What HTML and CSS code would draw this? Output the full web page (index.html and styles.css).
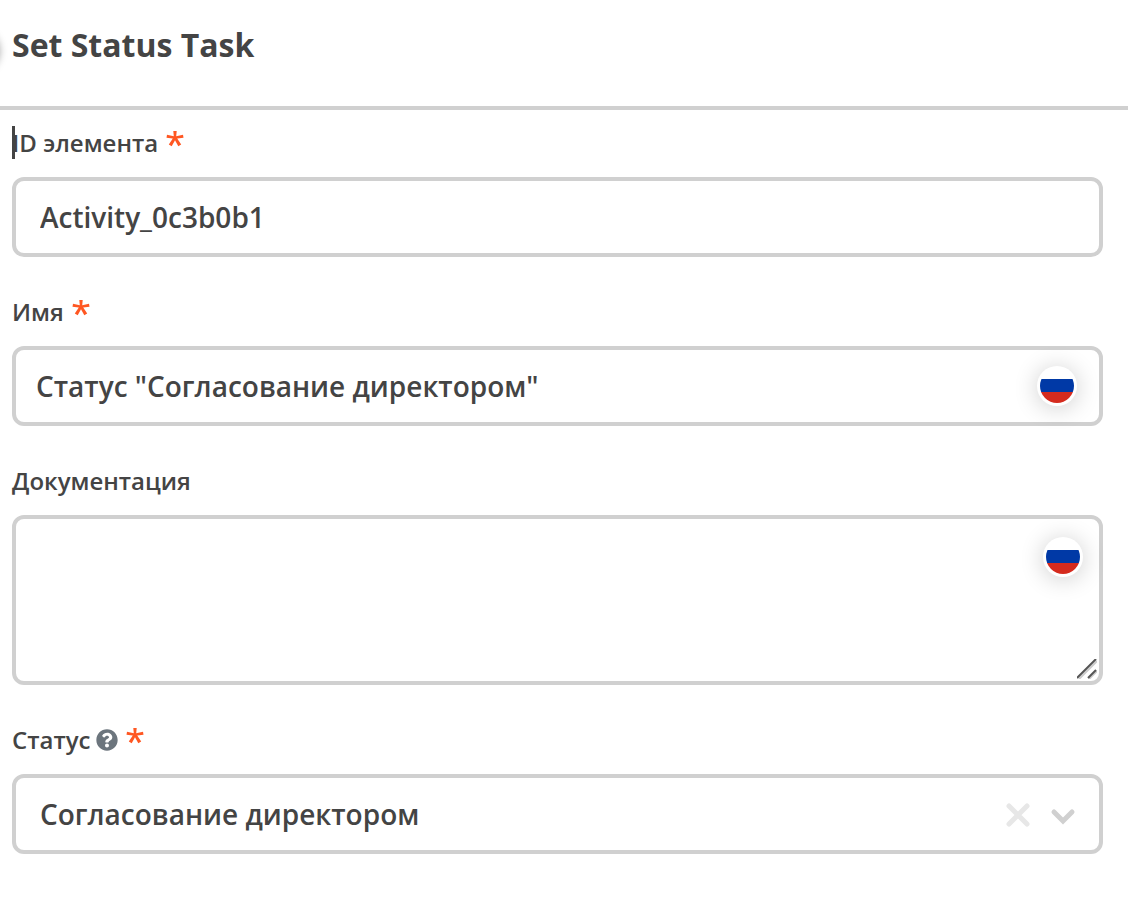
FILE: index.html
```html
<!DOCTYPE html>
<html lang="ru">
<head>
<meta charset="utf-8">
<meta name="viewport" content="width=device-width, initial-scale=1">
<title>Set Status Task</title>
<link rel="stylesheet" href="styles.css">
</head>
<body>
<header class="panel-header">
  <span class="panel-toggle"></span>
  <h1 class="panel-title">Set Status Task</h1>
</header>
<form class="form">
  <div class="field">
    <div class="field-label">
      <span class="caret"></span>
      <label for="element-id">ID элемента</label>
      <svg class="required" viewBox="0 0 18 18" aria-hidden="true"><path d="M7.300 0H10.700L10.200 5.300L17 3.700L17.500 6.800L11.200 7.500L15.200 13.500L12.300 15.200L9 9.300L5.700 15.200L2.800 13.500L6.800 7.500L.5 6.800L1 3.700L7.800 5.300Z"/></svg>
    </div>
    <div class="control">
      <input class="input" id="element-id" type="text" value="Activity_0c3b0b1">
    </div>
  </div>
  <div class="field">
    <div class="field-label">
      <label for="name">Имя</label>
      <svg class="required" viewBox="0 0 18 18" aria-hidden="true"><path d="M7.300 0H10.700L10.200 5.300L17 3.700L17.500 6.800L11.200 7.500L15.200 13.500L12.300 15.200L9 9.300L5.700 15.200L2.800 13.500L6.800 7.500L.5 6.800L1 3.700L7.800 5.300Z"/></svg>
    </div>
    <div class="control">
      <input class="input input-localized" id="name" type="text" value="Статус &quot;Согласование директором&quot;">
      <button class="flag flag-input" type="button" aria-label="Русский"><span class="flag-face"></span></button>
    </div>
  </div>
  <div class="field">
    <div class="field-label">
      <label for="docs">Документация</label>
    </div>
    <div class="control">
      <textarea class="input textarea" id="docs"></textarea>
      <button class="flag flag-textarea" type="button" aria-label="Русский"><span class="flag-face"></span></button>
      <svg class="grip" viewBox="0 0 20 20" aria-hidden="true"><path class="grip-light" d="M2 20L20 2M12 20L20 12"/><path class="grip-dark" d="M0 19L19 0M11 19L19 11"/></svg>
    </div>
  </div>
  <div class="field">
    <div class="field-label">
      <label for="status">Статус</label>
      <svg class="help" viewBox="0 0 512 512" role="img" aria-label="Справка"><path d="M504 256c0 137-111 248-248 248S8 393 8 256 119 8 256 8s248 111 248 248zM262.700 90c-54.500 0-89.300 23-116.500 63.800-3.500 5.300-2.400 12.400 2.700 16.300l34.700 26.300c5.200 3.900 12.600 3 16.700-2.100 17.900-22.700 30.100-35.800 57.300-35.800 20.400 0 45.700 13.100 45.700 33 0 15-12.400 22.700-32.500 34C247.100 238.500 216 254.900 216 296v4c0 6.600 5.400 12 12 12h56c6.600 0 12-5.400 12-12v-1.300c0-28.500 83.200-29.600 83.200-106.700 0-58-60.200-102-116.500-102zM256 338c-25.400 0-46 20.600-46 46s20.600 46 46 46 46-20.600 46-46-20.600-46-46-46z"/></svg>
      <svg class="required" viewBox="0 0 18 18" aria-hidden="true"><path d="M7.300 0H10.700L10.200 5.300L17 3.700L17.500 6.800L11.200 7.500L15.200 13.500L12.300 15.200L9 9.300L5.700 15.200L2.800 13.500L6.800 7.500L.5 6.800L1 3.700L7.800 5.300Z"/></svg>
    </div>
    <div class="control">
      <select class="input select" id="status"><option>Согласование директором</option></select>
      <div class="select-icons">
        <button class="clear" type="button" aria-label="Очистить"><svg class="icon" viewBox="0 0 26 26"><path d="M4 4L22 22M22 4L4 22"/></svg></button>
        <svg class="icon chevron" viewBox="0 0 26 26" aria-hidden="true"><path d="M4 10L13 19L22 10"/></svg>
      </div>
    </div>
  </div>
</form>
</body>
</html>
```

FILE: styles.css
```css
* { box-sizing: border-box; }

body {
  margin: 0;
  background: #fff;
  color: #444;
  font-family: "Open Sans", "Noto Sans", sans-serif;
  font-weight: 600;
  overflow-x: hidden;
}

.panel-header {
  position: relative;
  padding: 23px 12px 39px;
  border-bottom: 4px solid #d0d0d0;
}

.panel-title {
  margin: 0;
  font-size: 32px;
  line-height: 44px;
  font-weight: 700;
}

.panel-toggle {
  position: absolute;
  left: -41px;
  top: 31px;
  width: 40px;
  height: 40px;
  border-radius: 50%;
  box-shadow: 0 0 8px rgba(0, 0, 0, 0.4);
}

.form {
  display: flex;
  flex-direction: column;
  gap: 38px;
  padding: 16px 25px 24px 12px;
}

.field {
  display: flex;
  flex-direction: column;
  gap: 17px;
}

.field-label {
  position: relative;
  display: flex;
  align-items: center;
  gap: 8px;
  font-size: 24px;
  line-height: 34px;
}

.caret {
  position: absolute;
  left: 0;
  top: 0;
  width: 3px;
  height: 33px;
  background: #444;
}

.required {
  width: 18px;
  height: 18px;
  margin-bottom: 6px;
  fill: #ff5722;
}

.help {
  width: 22px;
  height: 22px;
  margin-left: -2px;
  fill: #6c757d;
}

.control {
  position: relative;
  display: flex;
}

.input {
  flex: 1;
  min-width: 0;
  height: 80px;
  margin: 0;
  padding: 0 24px;
  border: 4px solid #d0d0d0;
  border-radius: 12px;
  outline: none;
  background: #fff;
  color: #444;
  font: inherit;
  font-size: 28px;
}

.input-localized { padding: 0 88px 0 20px; }

.textarea {
  height: 170px;
  padding: 16px 88px 16px 20px;
  resize: none;
}

.select {
  appearance: none;
  padding-right: 108px;
}

.flag {
  position: absolute;
  width: 40px;
  height: 40px;
  padding: 3px;
  border: 0;
  border-radius: 50%;
  background: #fff;
  box-shadow: 0 2px 24px rgba(0, 0, 0, 0.2);
}

.flag-input { right: 26px; top: 20px; }
.flag-textarea { right: 20px; top: 22px; }

.flag-face {
  display: block;
  height: 34px;
  border-radius: 50%;
  background: linear-gradient(#fff 0 10px, #0039a6 10px 23px, #d52b1e 23px);
}

.grip {
  position: absolute;
  right: 6px;
  bottom: 6px;
  width: 20px;
  height: 20px;
  fill: none;
  stroke-width: 2;
}

.grip-dark { stroke: #555; }
.grip-light { stroke: #ccc; }

.select-icons {
  position: absolute;
  right: 27px;
  top: 28px;
  display: flex;
  gap: 19px;
  pointer-events: none;
}

.clear {
  display: flex;
  padding: 0;
  border: 0;
  background: none;
  color: #e7e7e7;
  pointer-events: auto;
}

.icon {
  width: 26px;
  height: 26px;
  fill: none;
  stroke: currentColor;
  stroke-width: 5;
  stroke-linecap: round;
}

.chevron { color: #d0d0d0; }
```
